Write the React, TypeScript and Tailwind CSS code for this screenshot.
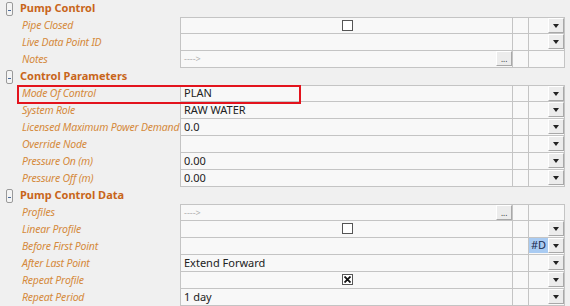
import React from "react";

type Row = {
  label: string;
  value?: string;
  placeholder?: boolean;
  check?: "empty" | "checked";
  dots?: boolean;
  drop?: boolean;
  tag?: string;
};

const sections: { title: string; rows: Row[] }[] = [
  {
    title: "Pump Control",
    rows: [
      { label: "Pipe Closed", check: "empty", drop: true },
      { label: "Live Data Point ID", drop: true },
      { label: "Notes", placeholder: true, dots: true },
    ],
  },
  {
    title: "Control Parameters",
    rows: [
      { label: "Mode Of Control", value: "PLAN", drop: true },
      { label: "System Role", value: "RAW WATER", drop: true },
      { label: "Licensed Maximum Power Demand", value: "0.0", drop: true },
      { label: "Override Node", drop: true },
      { label: "Pressure On (m)", value: "0.00", drop: true },
      { label: "Pressure Off (m)", value: "0.00", drop: true },
    ],
  },
  {
    title: "Pump Control Data",
    rows: [
      { label: "Profiles", placeholder: true, dots: true },
      { label: "Linear Profile", check: "empty", drop: true },
      { label: "Before First Point", drop: true, tag: "#D" },
      { label: "After Last Point", value: "Extend Forward", drop: true },
      { label: "Repeat Profile", check: "checked", drop: true },
      { label: "Repeat Period", value: "1 day", drop: true },
    ],
  },
];

const DropButton = () => (
  <div className="w-[16px] h-[15px] flex items-center justify-center bg-[#ececec] border-r border-b border-[#a8a8a8] border-t border-l border-t-white border-l-white">
    <svg width="6" height="4" viewBox="0 0 6 4">
      <path d="M0 0h6L3 4z" fill="#222" />
    </svg>
  </div>
);

const DotsButton = () => (
  <div className="w-[16px] h-[15px] flex items-end justify-center pb-[2px] bg-[#ececec] border-r border-b border-[#a8a8a8] border-t border-l border-t-white border-l-white text-[8px] leading-none text-[#333]">
    ...
  </div>
);

const CheckBox = ({ checked }: { checked: boolean }) => (
  <div className="w-[11px] h-[11px] border border-[#555] bg-white flex items-center justify-center">
    {checked && (
      <svg width="7" height="7" viewBox="0 0 7 7">
        <path d="M0.5 0.5L6.5 6.5M6.5 0.5L0.5 6.5" stroke="#111" strokeWidth="1.8" />
      </svg>
    )}
  </div>
);

const Collapse = () => (
  <div className="w-[7px] h-[14px] ml-[6px] mr-[7px] rounded-[2px] border border-[#9a9a9a] bg-[#f4f4f4] flex items-center justify-center">
    <div className="w-[3px] h-px bg-[#4a6a9a] mt-[3px]" />
  </div>
);

export default function App() {
  return (
    <div
      className="relative w-[570px] h-[306px] overflow-hidden bg-[#f0f0f0] text-[11px]"
      style={{ fontFamily: '"Noto Sans", "Open Sans", sans-serif' }}
    >
      {sections.map((s) => (
        <div key={s.title}>
          <div className="h-[17px] flex items-center">
            <Collapse />
            <span className="font-bold text-[#c8651a] text-[11px]">{s.title}</span>
          </div>
          <div>
            {s.rows.map((r, i) => (
              <div key={r.label} className="flex h-[17px]">
                <div className="w-[180px] pl-[22px] flex items-center italic text-[#d58a3c] whitespace-nowrap overflow-hidden text-[10.5px] tracking-[-0.2px]">
                  {r.label}
                </div>
                <div
                  className={`flex w-[385px] border-b border-r border-[#c4c4c4] bg-[#f8f8f8] ${
                    i === 0 ? "border-t" : ""
                  }`}
                >
                  <div className="relative w-[333px] border-l border-[#c4c4c4] flex items-center pl-[3px] text-[#222]">
                    {r.value && <span>{r.value}</span>}
                    {r.placeholder && <span className="text-[#b0b0b0] text-[9px]">----&gt;</span>}
                    {r.check && (
                      <div className="absolute left-[161px] top-[2px]">
                        <CheckBox checked={r.check === "checked"} />
                      </div>
                    )}
                    {r.dots && (
                      <div className="absolute right-0 top-0">
                        <DotsButton />
                      </div>
                    )}
                  </div>
                  <div className="w-[16px] border-l border-[#c4c4c4]" />
                  <div className="w-[36px] border-l border-[#c4c4c4] flex">
                    <div className="w-[19px] h-full">
                      {r.tag && (
                        <div className="h-[15px] bg-[#a9cbf2] text-[#1a2a50] text-[11px] flex items-center pl-[2px]">
                          {r.tag}
                        </div>
                      )}
                    </div>
                    {r.drop && <DropButton />}
                  </div>
                </div>
              </div>
            ))}
          </div>
        </div>
      ))}
      <div className="absolute left-[17px] top-[85px] w-[284px] h-[19px] border-2 border-[#e3131d]" />
    </div>
  );
}
